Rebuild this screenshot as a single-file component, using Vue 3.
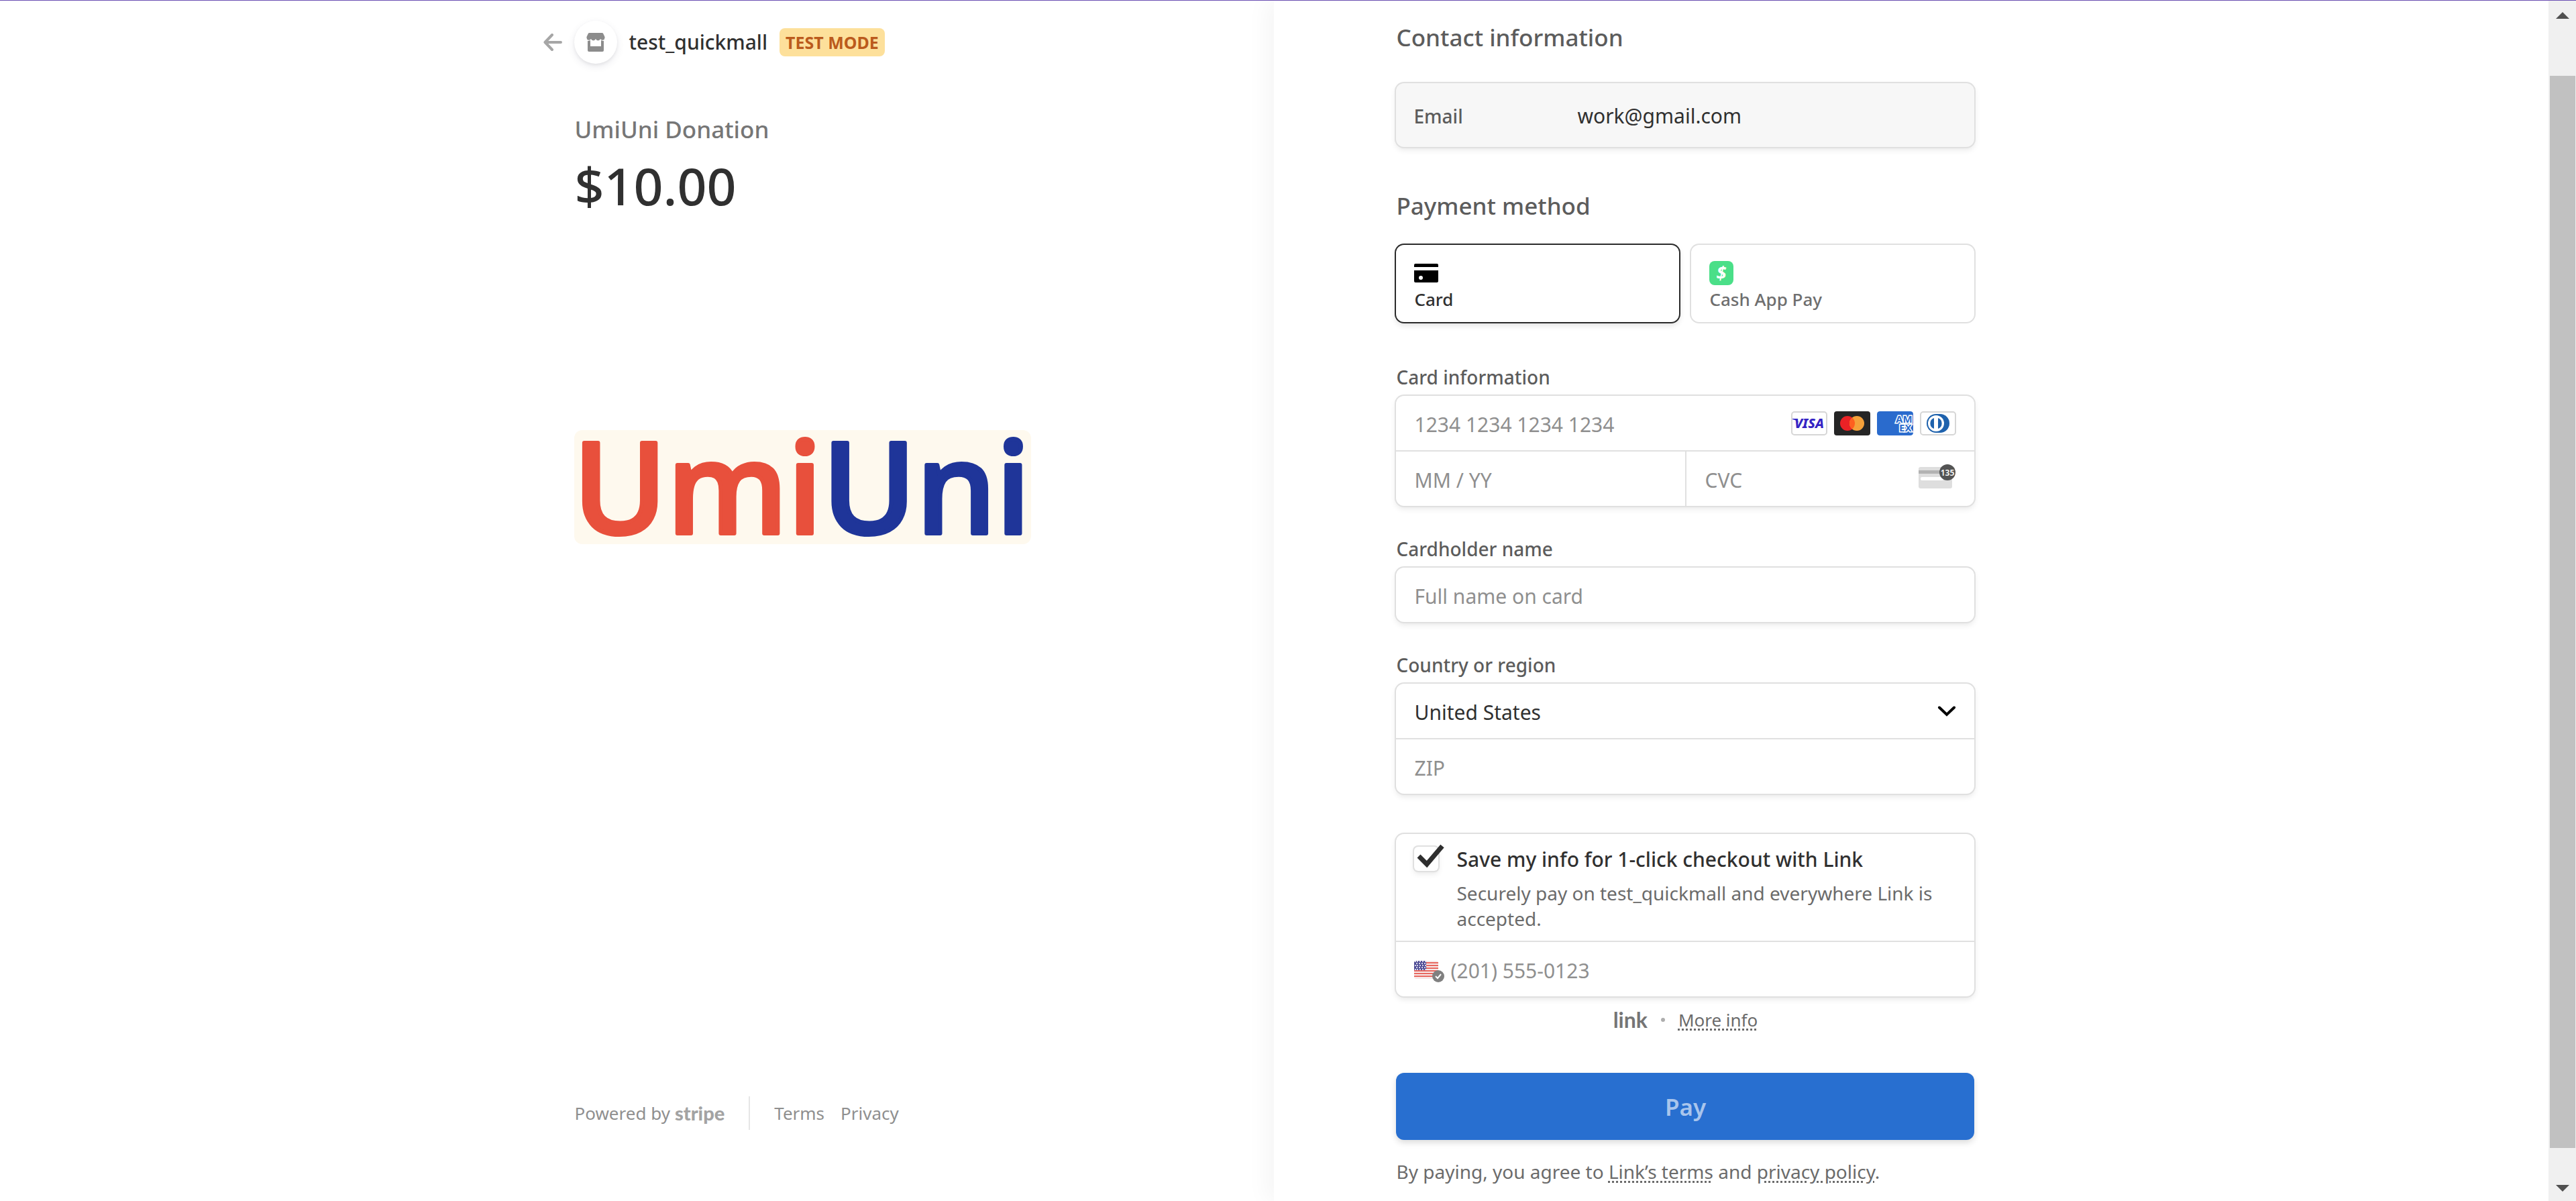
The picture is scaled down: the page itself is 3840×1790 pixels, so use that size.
<script setup>
import { ref } from 'vue'

const method = ref('card')
const saveInfo = ref(true)
const country = ref('United States')
const stars = Array.from({ length: 5 }, (_, r) => Array.from({ length: r % 2 ? 4 : 5 }, (_, c) => ({
  x: 2 + c * 4 - (c && r % 2 === 0 ? 1 : 0) + (r % 2 ? 2 : 0),
  y: 2 + r * 3,
}))).flat()
</script>

<template>
  <div class="page">
    <section class="summary">
      <div class="summary-inner">
        <header class="brand">
          <a class="back" href="#" aria-label="Back">
            <svg width="28" height="26" viewBox="0 0 28 26" fill="none" stroke="#a6a6a6" stroke-width="4" stroke-linecap="round" stroke-linejoin="round">
              <path d="M26 13H3M13 2L2.500 13L13 24" />
            </svg>
          </a>
          <span class="avatar">
            <svg width="28" height="28" viewBox="0 0 28 28" fill="#8c8c8c">
              <path d="M4.500 0h19a2 2 0 0 1 1.800 1.200L27.500 6v1.500a3.500 3.500 0 0 1-6.500 1.600a3.800 3.800 0 0 1-7 0a3.800 3.800 0 0 1-7 0A3.500 3.500 0 0 1 .5 7.500V6l2.200-4.800A2 2 0 0 1 4.500 0z" />
              <path d="M2 12q2.200 0 4-1v9h16v-9q1.800 1 4 1v14a2 2 0 0 1-2 2H4a2 2 0 0 1-2-2z" />
            </svg>
          </span>
          <span class="brand-name">test_quickmall</span>
          <span class="badge">TEST MODE</span>
        </header>

        <h1 class="product">UmiUni Donation</h1>
        <p class="price">$10.00</p>

        <svg class="product-image" viewBox="0 0 681 170" role="img" aria-label="UmiUni">
          <rect width="681" height="170" rx="12" fill="#fef9ee" />
          <text x="-2" y="154" font-size="190" font-weight="500" stroke-width="6" stroke-linejoin="round"><tspan fill="#e8503c" stroke="#e8503c">Umi</tspan><tspan fill="#1f3599" stroke="#1f3599">Uni</tspan></text>
        </svg>

        <footer class="footer">
          <a class="powered" href="#">Powered by <b class="stripe">stripe</b></a>
          <span class="footer-rule"></span>
          <a href="#">Terms</a>
          <a href="#">Privacy</a>
        </footer>
      </div>
    </section>

    <main class="payment">
      <form class="form" @submit.prevent>
        <h2 class="heading">Contact information</h2>
        <div class="box email">
          <span class="email-label">Email</span>
          <span>work@gmail.com</span>
        </div>

        <h2 class="heading heading-method">Payment method</h2>
        <div class="tabs">
          <button type="button" class="box tab" :class="{ selected: method === 'card' }" @click="method = 'card'">
            <svg width="36" height="36" viewBox="0 0 36 36">
              <path d="M2 4h32a2 2 0 0 1 2 2v3H0V6a2 2 0 0 1 2-2z" />
              <path fill-rule="evenodd" d="M0 14h36v16a2 2 0 0 1-2 2H2a2 2 0 0 1-2-2zM10 22a3 3 0 1 0 0 6a3 3 0 0 0 0-6z" />
            </svg>
            <span>Card</span>
          </button>
          <button type="button" class="box tab" :class="{ selected: method === 'cash' }" @click="method = 'cash'">
            <svg width="36" height="36" viewBox="0 0 36 36">
              <rect width="36" height="36" rx="8" fill="#4adf88" />
              <text x="18" y="28" text-anchor="middle" font-size="27" font-weight="700" font-style="italic" fill="#fff">$</text>
            </svg>
            <span>Cash App Pay</span>
          </button>
        </div>

        <label class="label label-card" for="card-number">Card information</label>
        <div class="box">
          <div class="row">
            <input id="card-number" class="input" type="text" placeholder="1234 1234 1234 1234">
            <div class="cards">
              <svg width="54" height="36" viewBox="0 0 54 36">
                <rect x="1" y="1" width="52" height="34" rx="4" fill="#fff" stroke="#d6d6d6" stroke-width="2" />
                <path d="M2 11h7l2 6q-3-4-9-5z" fill="#3424c4" />
                <text x="27" y="25" text-anchor="middle" font-size="20" font-weight="800" font-style="italic" fill="#3424c4">VISA</text>
              </svg>
              <svg width="54" height="36" viewBox="0 0 54 36">
                <rect width="54" height="36" rx="4" fill="#252525" />
                <circle cx="20" cy="18" r="11" fill="#eb2226" />
                <circle cx="34" cy="18" r="11" fill="#f5a13a" />
                <path d="M27 9.500a11 11 0 0 1 0 17a11 11 0 0 1 0-17z" fill="#ff5f1f" />
              </svg>
              <svg class="clip" width="54" height="36" viewBox="0 0 54 36">
                <rect width="54" height="36" rx="4" fill="#2a6bcd" />
                <g font-size="15" font-weight="700" fill="#2a6bcd" stroke="#fff" stroke-width="3" paint-order="stroke">
                  <text x="28" y="17">AM</text>
                  <text x="33" y="30">EX</text>
                </g>
              </svg>
              <svg width="54" height="36" viewBox="0 0 54 36">
                <rect x="1" y="1" width="52" height="34" rx="4" fill="#fff" stroke="#d6d6d6" stroke-width="2" />
                <path d="M24 4h6a14 14 0 0 1 0 28h-6a14 14 0 0 1 0-28z" fill="#1e62ad" />
                <circle cx="24" cy="18" r="12" fill="#fff" />
                <path d="M21 10a8.500 8.500 0 0 0 0 16zM27 10a8.500 8.500 0 0 1 0 16z" fill="#1e62ad" />
              </svg>
            </div>
          </div>
          <div class="split">
            <div class="row">
              <input class="input" type="text" placeholder="MM / YY" aria-label="Expiration">
            </div>
            <div class="row">
              <input class="input" type="text" placeholder="CVC" aria-label="CVC">
              <svg width="56" height="44" viewBox="0 0 56 44">
                <rect y="4" width="50" height="32" rx="3" fill="#dedede" />
                <rect y="9" width="50" height="5" fill="#b3b3b3" />
                <rect x="3" y="19" width="34" height="5" rx="2" fill="#fff" />
                <circle cx="43" cy="12" r="12" fill="#545454" />
                <text x="43" y="17" text-anchor="middle" font-size="12" font-weight="600" fill="#fff">135</text>
              </svg>
            </div>
          </div>
        </div>

        <label class="label" for="holder">Cardholder name</label>
        <div class="box">
          <div class="row">
            <input id="holder" class="input" type="text" placeholder="Full name on card">
          </div>
        </div>

        <label class="label" for="country">Country or region</label>
        <div class="box">
          <div class="row">
            <select id="country" v-model="country" class="input select">
              <option>United States</option>
              <option>Canada</option>
            </select>
            <svg class="chevron" width="28" height="16" viewBox="0 0 28 16" fill="none" stroke="#000" stroke-width="4" stroke-linecap="round">
              <path d="M3 2.500L14 13L25 2.500" />
            </svg>
          </div>
          <div class="row divided">
            <input class="input" type="text" placeholder="ZIP" aria-label="ZIP">
          </div>
        </div>

        <div class="box save">
          <div class="save-top">
            <span class="check">
              <input id="save" v-model="saveInfo" type="checkbox">
              <svg v-if="saveInfo" width="44" height="38" viewBox="0 0 44 38" fill="none" stroke="#2e2e2e" stroke-width="7">
                <path d="M3 18L15 30L38 3" />
              </svg>
            </span>
            <div>
              <label class="save-title" for="save">Save my info for 1-click checkout with Link</label>
              <p class="save-text">Securely pay on test_quickmall and everywhere Link is accepted.</p>
            </div>
          </div>
          <div class="row divided">
            <svg class="flag" width="46" height="38" viewBox="0 0 46 38">
              <rect y="6" width="36" height="27" rx="3" fill="#f6e9e9" />
              <path d="M0 9h36M0 13h36M0 17h36M0 21h36M0 25h36M0 29h36" stroke="#e8675f" stroke-width="2" />
              <path d="M3 6h15v14H0V9a3 3 0 0 1 3-3z" fill="#4c4a94" />
              <circle v-for="(s, i) in stars" :key="i" :cx="s.x" :cy="s.y + 5" r="1" fill="#fff" />
              <circle cx="36" cy="29" r="9" fill="#808080" />
              <path d="M32 29l3 3l5-6" fill="none" stroke="#fff" stroke-width="2" />
            </svg>
            <input class="input" type="tel" placeholder="(201) 555-0123" aria-label="Phone number">
          </div>
        </div>

        <div class="more">
          <b class="link-logo">link</b>
          <span class="dot"></span>
          <a class="dotted" href="#">More info</a>
        </div>

        <button class="pay" type="submit">Pay</button>
        <p class="terms">By paying, you agree to <a class="dotted" href="#">Link’s terms</a> and <a class="dotted" href="#">privacy policy</a>.</p>
      </form>
    </main>

    <div class="scrollbar" aria-hidden="true">
      <svg width="20" height="10" viewBox="0 0 20 10"><path d="M10 0L20 10H0z" fill="#505050" /></svg>
      <span class="thumb"></span>
      <svg width="20" height="10" viewBox="0 0 20 10"><path d="M0 0H20L10 10z" fill="#505050" /></svg>
    </div>
  </div>
</template>

<style>
body {
  margin: 0;
  background: #fff;
}
</style>

<style scoped>
.page {
  box-sizing: border-box;
  display: flex;
  min-height: 100vh;
  border-top: 1px solid #6b4fb3;
  font-family: "Noto Sans", "Open Sans", sans-serif;
  color: #303030;
}
.page * {
  box-sizing: border-box;
}
h1, h2, p {
  margin: 0;
}
a {
  color: inherit;
  text-decoration: none;
}
svg {
  display: block;
  flex: none;
}
svg text {
  font-family: "Noto Sans", "Open Sans", sans-serif;
}
input, select, button {
  font: inherit;
  color: inherit;
}

.summary, .payment {
  flex: 1 1 50%;
  min-width: 0;
  display: flex;
}
.summary {
  justify-content: flex-end;
  padding: 30px 179px 106px 60px;
}
.payment {
  padding: 33px 60px 24px 182px;
  box-shadow: -12px 0 30px rgba(0, 0, 0, 0.04);
}
.summary-inner {
  width: 100%;
  max-width: 864px;
  display: flex;
  flex-direction: column;
}
.form {
  width: 100%;
  max-width: 862px;
}

.brand {
  display: flex;
  align-items: center;
  margin-left: -46px;
}
.avatar {
  display: flex;
  align-items: center;
  justify-content: center;
  width: 64px;
  height: 64px;
  margin: 0 17px 0 18px;
  border-radius: 50%;
  box-shadow: 0 4px 12px rgba(50, 50, 93, 0.1), 0 2px 4px rgba(0, 0, 0, 0.06);
}
.brand-name {
  font-size: 30px;
  font-weight: 500;
  line-height: 38px;
}
.badge {
  margin-left: 18px;
  padding: 0 9px;
  border-radius: 8px;
  background: #fde09b;
  color: #bb5a1c;
  font-size: 25px;
  font-weight: 700;
  line-height: 42px;
}
.product {
  margin-top: 76px;
  color: #767676;
  font-size: 35px;
  font-weight: 500;
  line-height: 44px;
}
.price {
  margin-top: 14px;
  font-size: 77px;
  font-weight: 500;
  line-height: 96px;
}
.product-image {
  width: 100%;
  max-width: 681px;
  margin-top: 316px;
}
.footer {
  display: flex;
  align-items: center;
  margin-top: auto;
  color: #8f8f8f;
  font-size: 26px;
  line-height: 36px;
}
.footer a + a {
  margin-left: 24px;
}
.powered {
  display: flex;
  align-items: center;
  gap: 7px;
}
.stripe {
  color: #a3a3a3;
  font-family: Lato, sans-serif;
  font-size: 29px;
  font-weight: 900;
}
.footer-rule {
  width: 2px;
  height: 50px;
  margin: 0 36px;
  background: #e6e6e6;
}

.heading {
  color: #5c5c5c;
  font-size: 35px;
  font-weight: 500;
  line-height: 44px;
}
.heading-method {
  margin-top: 66px;
}
.box {
  border-radius: 12px;
  background: #fff;
  box-shadow: 0 0 0 2px #e0e0e0, 0 4px 10px rgba(0, 0, 0, 0.1);
}
.email {
  display: flex;
  align-items: center;
  height: 95px;
  margin-top: 46px;
  padding: 2px 26px 0;
  background: #f7f7f7;
  font-size: 30px;
}
.email-label {
  width: 244px;
  color: #5c5c5c;
  font-size: 28px;
  font-weight: 500;
}
.tabs {
  display: flex;
  gap: 18px;
  margin-top: 36px;
}
.tab {
  flex: 1 1 0;
  display: flex;
  flex-direction: column;
  align-items: flex-start;
  gap: 5px;
  padding: 24px 27px 18px;
  border: 0;
  color: #6e6e6e;
  font-size: 26px;
  font-weight: 500;
  line-height: 32px;
  box-shadow: 0 0 0 2px #e0e0e0;
}
.tab.selected {
  color: #303030;
  box-shadow: 0 0 0 2px #2b2b2b, 0 4px 10px rgba(0, 0, 0, 0.14);
}
.label {
  display: block;
  margin: 46px 0 10px;
  color: #5c5c5c;
  font-size: 28px;
  font-weight: 500;
  line-height: 36px;
}
.label-card {
  margin-top: 64px;
}
.row {
  display: flex;
  align-items: center;
  height: 81px;
  padding: 0 27px;
}
.input {
  flex: 1 1 0;
  min-width: 0;
  height: 100%;
  padding: 3px 0 0;
  border: 0;
  outline: 0;
  background: transparent;
  font-size: 30px;
}
.input::placeholder {
  color: #8f8f8f;
  opacity: 1;
}
.cards {
  display: flex;
  gap: 10px;
}
.clip {
  border-radius: 4px;
}
.split {
  display: grid;
  grid-template-columns: repeat(2, minmax(0, 1fr));
  border-top: 2px solid #e0e0e0;
}
.split .row + .row {
  border-left: 2px solid #e0e0e0;
}
.divided {
  height: 83px;
  border-top: 2px solid #e0e0e0;
}
.select {
  appearance: none;
}
.chevron {
  pointer-events: none;
}
.save {
  margin-top: 60px;
}
.save-top {
  display: flex;
  gap: 27px;
  padding: 19px 27px 14px;
}
.check {
  position: relative;
  flex: none;
  width: 36px;
  height: 36px;
}
.check input {
  display: block;
  appearance: none;
  width: 100%;
  height: 100%;
  margin: 0;
  border-radius: 6px;
  box-shadow: 0 0 0 2px #e0e0e0, 0 4px 8px rgba(0, 0, 0, 0.1);
}
.check svg {
  position: absolute;
  top: -4px;
  left: 4px;
  pointer-events: none;
}
.save-title {
  display: block;
  font-size: 30px;
  font-weight: 500;
  line-height: 38px;
}
.save-text {
  margin-top: 12px;
  color: #6b6b6b;
  font-size: 28px;
  line-height: 38px;
}
.flag {
  margin-right: 8px;
}
.more {
  display: flex;
  align-items: center;
  justify-content: center;
  margin-top: 17px;
  color: #6b6b6b;
  font-size: 26px;
  line-height: 36px;
}
.link-logo {
  color: #757575;
  font-family: Lato, "Noto Sans", sans-serif;
  font-size: 32px;
  font-weight: 700;
}
.dot {
  width: 6px;
  height: 6px;
  margin: 0 20px;
  border-radius: 50%;
  background: #adadad;
}
.dotted {
  text-decoration: underline dotted;
  text-decoration-thickness: 3px;
  text-underline-offset: 3px;
}
.pay {
  display: block;
  width: 100%;
  height: 100px;
  margin-top: 61px;
  border: 0;
  border-radius: 12px;
  background: #286fd0;
  box-shadow: 0 4px 10px rgba(0, 0, 0, 0.14);
  color: #a9c5ec;
  font-size: 35px;
  font-weight: 600;
}
.terms {
  margin-top: 29px;
  color: #6b6b6b;
  font-size: 28px;
  line-height: 36px;
}

.scrollbar {
  flex: none;
  display: flex;
  flex-direction: column;
  align-items: center;
  width: 41px;
  padding: 17px 1px 14px;
  background: #f0f0f0;
}
.thumb {
  flex: 1 1 auto;
  width: 38px;
  margin: 85px 0 55px;
  background: #c1c1c1;
}
</style>
